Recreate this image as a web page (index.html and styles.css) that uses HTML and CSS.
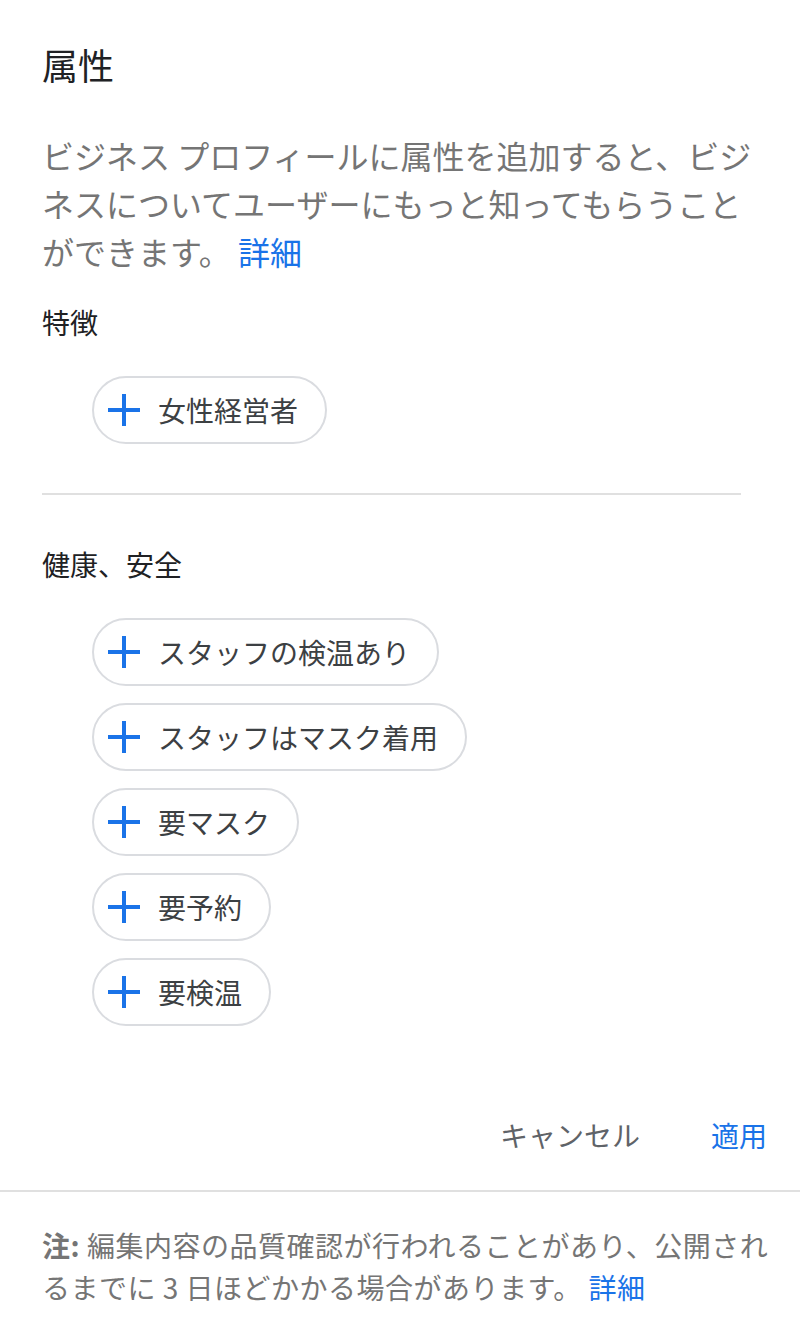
FILE: index.html
```html
<!DOCTYPE html>
<html lang="ja">
<head>
  <meta charset="UTF-8">
  <meta name="viewport" content="width=device-width, initial-scale=1.0">
  <title>属性</title>
  <link rel="stylesheet" href="styles.css">
</head>
<body>
  <div class="dialog">
    <h1 class="title">属性</h1>
    <p class="desc">ビジネス プロフィールに属性を追加すると、ビジネスについてユーザーにもっと知ってもらうことができます。 <a href="#" class="link">詳細</a></p>

    <!-- 特徴 -->
    <section class="group">
      <h2 class="group-title">特徴</h2>
      <div class="chips">
        <button class="chip"><span class="plus"></span>女性経営者</button>
      </div>
    </section>

    <hr class="divider">

    <!-- 健康、安全 -->
    <section class="group">
      <h2 class="group-title">健康、安全</h2>
      <div class="chips">
        <button class="chip"><span class="plus"></span>スタッフの検温あり</button>
        <button class="chip"><span class="plus"></span>スタッフはマスク着用</button>
        <button class="chip"><span class="plus"></span>要マスク</button>
        <button class="chip"><span class="plus"></span>要予約</button>
        <button class="chip"><span class="plus"></span>要検温</button>
      </div>
    </section>

    <div class="actions">
      <button class="btn">キャンセル</button>
      <button class="btn primary">適用</button>
    </div>
  </div>

  <footer class="note">
    <p><b>注:</b> 編集内容の品質確認が行われることがあり、公開されるまでに 3 日ほどかかる場合があります。 <a href="#" class="link">詳細</a></p>
  </footer>
</body>
</html>
```

FILE: styles.css
```css
* {
  margin: 0;
  padding: 0;
  box-sizing: border-box;
  font-family: "Noto Sans CJK JP", "Noto Sans", sans-serif;
}

body {
  background-color: #fff;
  color: #202124;
}

.link {
  color: #1a73e8;
  text-decoration: none;
}

/* Dialog */
.dialog {
  padding: 40px 33px 0 42px;
}

.title {
  font-size: 36px;
  font-weight: 400;
  line-height: 48px;
}

.desc {
  margin-top: 43px;
  font-size: 32px;
  line-height: 48px;
  color: #757575;
}

.group-title {
  margin-top: 27px;
  font-size: 28px;
  font-weight: 400;
  line-height: 40px;
  color: #202124;
}

.chips {
  margin-top: 34px;
  padding-left: 50px;
  display: flex;
  flex-direction: column;
  align-items: flex-start;
  gap: 17px;
}

.chip {
  height: 68px;
  display: flex;
  align-items: center;
  padding: 0 27px 0 14px;
  border: 2px solid #dadce0;
  border-radius: 34px;
  background: #fff;
  font-size: 28px;
  color: #3c4043;
  cursor: pointer;
}

.plus {
  position: relative;
  width: 32px;
  height: 32px;
  margin-right: 18px;
}

.plus::before,
.plus::after {
  content: "";
  position: absolute;
  background-color: #1a73e8;
}

.plus::before {
  left: 0;
  top: 14px;
  width: 32px;
  height: 4px;
}

.plus::after {
  left: 14px;
  top: 0;
  width: 4px;
  height: 32px;
}

.divider {
  margin: 49px 26px 0 0;
  border: none;
  border-top: 2px solid #e0e0e0;
}

.divider + .group .group-title {
  margin-top: 49px;
}

/* Buttons */
.actions {
  margin-top: 89px;
  display: flex;
  justify-content: flex-end;
  gap: 71px;
}

.btn {
  background: none;
  border: none;
  font-size: 28px;
  line-height: 40px;
  color: #5f6368;
  cursor: pointer;
}

.btn.primary {
  color: #1a73e8;
}

/* Note */
.note {
  margin-top: 35px;
  border-top: 2px solid #e0e0e0;
  padding: 32px 20px 0 42px;
}

.note p {
  font-size: 28px;
  line-height: 42px;
  letter-spacing: 0.5px;
  color: #757575;
}

.note b {
  font-weight: 700;
}
```
